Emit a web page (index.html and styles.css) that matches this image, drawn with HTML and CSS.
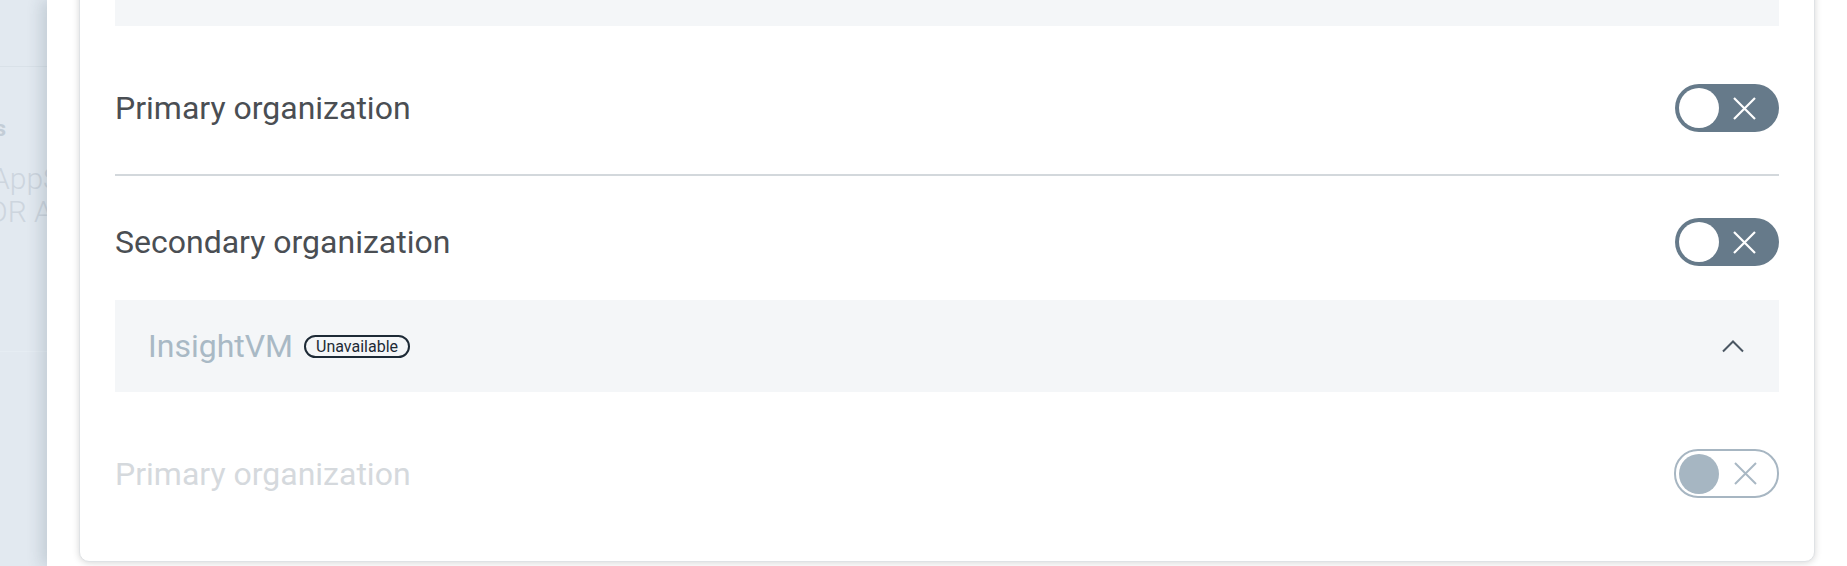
FILE: index.html
```html
<!DOCTYPE html>
<html lang="en">
<head>
<meta charset="utf-8">
<title>Organizations</title>
<link rel="stylesheet" href="styles.css">
</head>
<body>
<div class="page">
  <div class="backdrop">
    <div class="bg-line bg-line-top"></div>
    <div class="bg-heading"><span>Products</span></div>
    <div class="bg-text">AppSec</div>
    <div class="bg-text bg-text-2">DR Admin</div>
    <div class="bg-line bg-line-bottom"></div>
  </div>
  <div class="drawer">
    <div class="card">
      <div class="product-header">
        <span class="product-name">InsightIDR</span>
        <svg class="chevron" width="24" height="14" viewBox="0 0 24 14"><polyline points="2,12.5 12,2.5 22,12.5" fill="none" stroke="#4b5763" stroke-width="2"/></svg>
      </div>
      <div class="row row-first">
        <span class="label">Primary organization</span>
        <span class="toggle">
          <span class="knob"></span>
          <svg class="x" width="23" height="23" viewBox="0 0 23 23"><path d="M1 1 L22 22 M22 1 L1 22" stroke="#ffffff" stroke-width="2.2" fill="none"/></svg>
        </span>
      </div>
      <div class="divider"></div>
      <div class="row row-second">
        <span class="label">Secondary organization</span>
        <span class="toggle">
          <span class="knob"></span>
          <svg class="x" width="23" height="23" viewBox="0 0 23 23"><path d="M1 1 L22 22 M22 1 L1 22" stroke="#ffffff" stroke-width="2.2" fill="none"/></svg>
        </span>
      </div>
      <div class="product-header product-header-second">
        <span class="product-title">
          <span class="product-name">InsightVM</span>
          <span class="badge">Unavailable</span>
        </span>
        <svg class="chevron" width="24" height="14" viewBox="0 0 24 14"><polyline points="2,12.5 12,2.5 22,12.5" fill="none" stroke="#4b5763" stroke-width="2"/></svg>
      </div>
      <div class="row row-disabled">
        <span class="label label-disabled">Primary organization</span>
        <span class="toggle toggle-disabled">
          <span class="knob"></span>
          <svg class="x" width="23" height="23" viewBox="0 0 23 23"><path d="M1 1 L22 22 M22 1 L1 22" stroke="#a9b8c4" stroke-width="2" fill="none"/></svg>
        </span>
      </div>
    </div>
  </div>
</div>
</body>
</html>
```

FILE: styles.css
```css
* { box-sizing: border-box; }

html, body {
  margin: 0;
  padding: 0;
  background: #ffffff;
  font-family: Roboto, "Liberation Sans", Arial, sans-serif;
}

.page {
  display: flex;
  width: 1847px;
  height: 566px;
  overflow: hidden;
}

/* faded page behind the drawer */
.backdrop {
  width: 47px;
  flex: none;
  background: #e2e9f0;
  padding-top: 66px;
  overflow: hidden;
  color: #cdd5de;
}

.bg-line {
  height: 1px;
  background: #d9e1e8;
}

.bg-heading {
  width: 6px;
  display: flex;
  justify-content: flex-end;
  margin-top: 49px;
  font-size: 22px;
  line-height: 26px;
  font-weight: 700;
  color: #c3cdd7;
  white-space: nowrap;
}

.bg-text {
  font-size: 30px;
  line-height: 33px;
  font-weight: 300;
  white-space: nowrap;
  margin-top: 20px;
  text-indent: -9px;
}

.bg-text-2 {
  margin-top: 0;
  text-indent: -12px;
}

.bg-line-bottom {
  margin-top: 123px;
  background: #e6edf3;
}

/* drawer */
.drawer {
  flex: 1;
  position: relative;
  background: #ffffff;
  padding: 0 32px;
  box-shadow: -6px 0 14px rgba(40, 60, 80, 0.16);
}

.card {
  margin-top: -103px;
  background: #ffffff;
  border: 1px solid #dfe2e5;
  border-radius: 10px;
  padding: 36px 35px 63px;
  box-shadow: 0 1px 7px rgba(0, 0, 0, 0.16);
}

.product-header {
  height: 92px;
  background: #f4f6f8;
  display: flex;
  align-items: center;
  justify-content: space-between;
  padding: 0 34px 0 33px;
}

.product-header-second {
  margin-top: 34px;
}

.product-title {
  display: flex;
  align-items: center;
  gap: 11px;
}

.product-name {
  font-size: 32px;
  color: #a9b9c5;
}

.badge {
  font-size: 16px;
  line-height: 19px;
  color: #1d2a36;
  border: 2px solid #1d2a36;
  border-radius: 12px;
  padding: 0 10px;
}

.chevron {
  display: block;
}

.row {
  height: 48px;
  display: flex;
  align-items: center;
  justify-content: space-between;
}

.row-first { margin-top: 58px; }
.row-second { margin-top: 42px; }
.row-disabled { margin-top: 57px; height: 49px; }

.label {
  font-size: 32px;
  color: #4a4e53;
}

.label-disabled {
  color: #d5d9dd;
}

.divider {
  margin-top: 42px;
  height: 2px;
  background: #d3d8dc;
}

.toggle {
  width: 104px;
  height: 48px;
  border-radius: 24px;
  background: #667a8a;
  padding: 4px;
  display: flex;
  align-items: center;
}

.knob {
  width: 40px;
  height: 40px;
  border-radius: 50%;
  background: #ffffff;
  flex: none;
}

.x {
  display: block;
  margin-left: 14px;
}

.toggle-disabled {
  width: 105px;
  height: 49px;
  background: #ffffff;
  border: 2px solid #a7b6c2;
  padding: 3px;
}

.toggle-disabled .knob {
  background: #a6b6c2;
}

.toggle-disabled .x {
  margin-left: 15px;
}
```
